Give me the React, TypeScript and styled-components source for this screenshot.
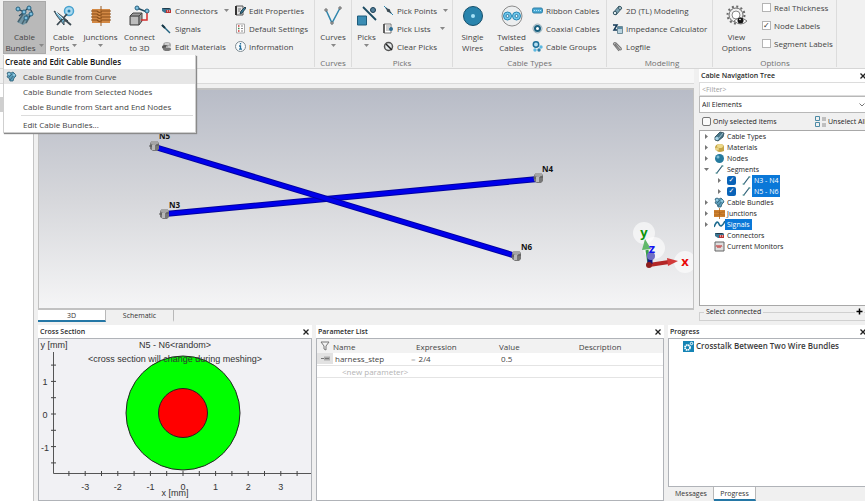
import React from "react";
import styled, { createGlobalStyle, css } from "styled-components";

const ui = `"Open Sans", "Noto Sans", sans-serif`;
const plot = `"Liberation Sans", Arial, sans-serif`;

const GlobalStyle = createGlobalStyle`
  *, *::before, *::after { box-sizing: border-box; }
  body { margin: 0; background: #f0f0f0; font-family: ${ui}; font-size: 8px; color: #444; }
  button, input, select { font: inherit; color: inherit; margin: 0; padding: 0; }
  button { border: 0; background: none; }
  svg { display: block; flex: none; }
`;

const Page = styled.div`
  position: relative;
  display: flex;
  flex-direction: column;
  min-height: 100vh;
  overflow: hidden;
`;

/* Ribbon */

const Ribbon = styled.header`
  display: flex;
  height: 69px;
  background: #f1f1f1;
  border-bottom: 1px solid #d6d6d6;
`;

const Group = styled.section<{ $w: number; $pad?: number }>`
  display: flex;
  flex-direction: column;
  flex: none;
  width: ${(p) => p.$w}px;
  padding-left: ${(p) => p.$pad ?? 0}px;
  border-right: 1px solid #dcdcdc;
  margin-bottom: 1px;
`;

const Tools = styled.div<{ $gap?: number }>`
  display: flex;
  flex: 1;
  align-items: flex-start;
  gap: ${(p) => p.$gap ?? 0}px;
`;

const GroupName = styled.h2`
  margin: 0;
  font-size: 8px;
  line-height: 9px;
  font-weight: 400;
  text-align: center;
  color: #707070;
`;

const BigButton = styled.button<{ $w: number; $active?: boolean }>`
  display: flex;
  flex-direction: column;
  align-items: center;
  flex: none;
  width: ${(p) => p.$w}px;
  height: 53px;
  margin-top: 1px;
  padding-top: 4px;
  white-space: nowrap;
  ${(p) =>
    p.$active &&
    css`
      background: #b9b9b9;
      box-shadow: inset 0 0 0 1px #aaa;
    `}
  svg:first-child { margin-bottom: 4px; }
`;

const Line = styled.span`
  display: flex;
  align-items: center;
  gap: 3px;
  height: 11px;
`;

const SmallColumn = styled.div<{ $w: number; $pad?: number }>`
  display: flex;
  flex-direction: column;
  flex: none;
  width: ${(p) => p.$w}px;
  padding-top: 1px;
  padding-left: ${(p) => p.$pad ?? 0}px;
`;

const SmallButton = styled.button`
  display: flex;
  align-items: center;
  gap: 3px;
  height: 18px;
  white-space: nowrap;
`;

const CaretBox = styled.span<{ $end?: boolean }>`
  margin-left: ${(p) => (p.$end ? "auto" : "6px")};
`;

const OptionColumn = styled.div`
  display: flex;
  flex-direction: column;
  gap: 4px;
`;

const Option = styled.label`
  display: flex;
  align-items: center;
  gap: 3px;
  height: 14px;
  white-space: nowrap;
`;

const OptionBox = styled.input`
  appearance: none;
  width: 9px;
  height: 9px;
  border: 1px solid #b4b4b4;
  background: #fff;
  &:checked::after {
    content: "✓";
    display: block;
    font: 8px/7px "DejaVu Sans", sans-serif;
    color: #333;
  }
`;

/* Drop-down menu */

const Menu = styled.div`
  position: absolute;
  z-index: 2;
  left: 3px;
  top: 55px;
  width: 193px;
  background: #fff;
  border: 1px solid #cfcfcf;
  border-top: 0;
  box-shadow: 1px 1px 1px #8a8a8a;
`;

const MenuTitle = styled.h3`
  margin: 0;
  padding-left: 1px;
  height: 14px;
  font: 600 8px/14px ${ui};
  color: #111;
`;

const MenuItem = styled.button<{ $hot?: boolean }>`
  display: flex;
  align-items: center;
  width: 100%;
  height: 15px;
  background: ${(p) => (p.$hot ? "#e6e6e6" : "#fff")};
`;

const MenuIcon = styled.span`
  width: 19px;
  padding-left: 2px;
`;

const Separator = styled.hr`
  margin: 1px 2px 1px 17px;
  border: 0;
  border-top: 1px solid #dcdcdc;
`;

/* Workspace */

const Workspace = styled.main`
  display: flex;
  flex: 1;
  margin-right: -4px;
`;

const SideStrip = styled.aside`
  flex: none;
  width: 34px;
  margin-top: 14px;
  padding-top: 13px;
  background: #fff;
  border-top: 1px solid #dadada;
  border-right: 1px solid #c4c4c4;
`;

const StripMark = styled.div`
  height: 15px;
  background: #cfcfcf;
`;

const Docks = styled.div`
  display: flex;
  flex-direction: column;
  flex: 1;
  min-width: 0;
  gap: 3px;
  padding-left: 4px;
`;

const Upper = styled.div`
  display: flex;
  flex: 1;
  gap: 5px;
`;

const ViewColumn = styled.div`
  display: flex;
  flex-direction: column;
  flex: 1;
  min-width: 0;
`;

const DocumentBar = styled.div`
  height: 15px;
  margin-left: -4px;
  margin-bottom: 4px;
  background: #f7f7f7;
  border-bottom: 1px solid #dadada;
`;

const Viewport = styled.div`
  display: flex;
  flex: 1;
  border: 2px solid #c2c2c2;
  border-left-width: 1px;
  border-right-width: 1px;
  background: linear-gradient(#b8bcc7, #d6d7db 50%, #f5f5f6);
`;

const Scene = styled.svg`
  flex: 1;
  width: 100%;
  min-width: 0;
  height: auto;
  text { font: 700 8px ${ui}; fill: #111; }
`;

const AxisName = styled.text<{ $color: string }>`
  && { font: 700 13px ${ui}; fill: ${(p) => p.$color}; text-anchor: middle; }
`;

const TabBar = styled.div`
  display: flex;
  flex: none;
  height: 12px;
`;

const Tab = styled.button<{ $on?: boolean; $w: number }>`
  width: ${(p) => p.$w}px;
  font: 7px/9px ${ui};
  color: #333;
  border-right: 1px solid #b8b8b8;
  border-bottom: 2px solid ${(p) => (p.$on ? "#2477a6" : "transparent")};
  background: ${(p) => (p.$on ? "#fff" : "transparent")};
`;

/* Panels */

const Panel = styled.section`
  display: flex;
  flex-direction: column;
  min-width: 0;
`;

const NavPanel = styled(Panel)`
  flex: none;
  width: 170px;
  margin-bottom: 1px;
  font: 7px ${ui};
  color: #222;
`;

const PanelHead = styled.div`
  display: flex;
  align-items: center;
  justify-content: space-between;
  flex: none;
  height: 13px;
  padding: 0 2px;
  background: #fff;
`;

const PanelName = styled.h2`
  margin: 0;
  font: 600 7px/12px ${ui};
  color: #2a2a2a;
`;

const Close = styled.button`
  display: flex;
  padding: 1px;
`;

const PanelBody = styled.div<{ $tint?: boolean }>`
  display: flex;
  flex-direction: column;
  flex: 1;
  min-height: 0;
  border: 1px solid #b0b3b8;
  background: ${(p) => (p.$tint ? "#f1f1f4" : "#fff")};
`;

const Filter = styled.input`
  height: 14px;
  padding: 0 2px;
  border: 1px solid #dcdcdc;
  background: #fff;
  &::placeholder { color: #a0a0a0; opacity: 1; }
`;

const SelectWrap = styled.div`
  display: flex;
  align-items: center;
  height: 17px;
  border: 1px solid #b8b8b8;
  background: #fff;
  padding-right: 3px;
`;

const Select = styled.select`
  appearance: none;
  flex: 1;
  padding: 0 2px;
  border: 0;
  background: none;
`;

const NavTools = styled.div`
  display: flex;
  align-items: center;
  justify-content: space-between;
  height: 17px;
  padding: 0 3px;
  white-space: nowrap;
`;

const CheckLabel = styled.label`
  display: flex;
  align-items: center;
  gap: 2px;
`;

const PlainBox = styled.input`
  appearance: none;
  width: 9px;
  height: 9px;
  border: 1px solid #777;
  border-radius: 2px;
  background: #fafafa;
`;

const Unselect = styled.button`
  display: flex;
  align-items: center;
  gap: 2px;
`;

const Tree = styled.ul`
  flex: 1;
  margin: 0;
  padding: 0;
  list-style: none;
  background: #fff;
  border: 1px solid #a8a8a8;
`;

const TreeRow = styled.li<{ $level: number }>`
  display: flex;
  align-items: center;
  height: 11px;
  padding-left: ${(p) => 3 + p.$level * 13}px;
`;

const Twisty = styled.span`
  display: flex;
  justify-content: center;
  width: 7px;
  margin-right: 4px;
`;

const TreeIcon = styled.span`
  width: 11px;
`;

const TreeCheck = styled.input`
  appearance: none;
  width: 9px;
  height: 9px;
  margin-right: 5px;
  border-radius: 2px;
  background: #0a63b8;
  &::after {
    content: "✓";
    display: block;
    font: 7px/9px "DejaVu Sans", sans-serif;
    text-align: center;
    color: #fff;
  }
`;

const TreeText = styled.span<{ $on?: boolean }>`
  padding: 0 2px;
  line-height: 11px;
  background: ${(p) => (p.$on ? "#0a78d8" : "transparent")};
  color: ${(p) => (p.$on ? "#fff" : "inherit")};
`;

const Connected = styled.fieldset`
  display: flex;
  align-items: flex-start;
  justify-content: flex-end;
  min-width: 0;
  height: 15px;
  margin: 0;
  padding: 0 4px 0 0;
  border: 1px solid #d0d0d0;
  legend { margin-left: 4px; padding: 0 2px; line-height: 12px; }
  button { display: flex; margin-top: -11px; padding: 1px; background: #f0f0f0; }
`;

const Lower = styled.div`
  display: grid;
  flex: none;
  grid-template-columns: 274fr 348fr 201fr;
  gap: 4px;
  height: 176px;
`;

const Chart = styled.svg`
  width: 100%;
  height: 100%;
  text { font: 9px ${plot}; fill: #333; text-anchor: middle; }
`;

const Params = styled.table`
  width: 100%;
  table-layout: fixed;
  border-collapse: collapse;
  text-align: left;
  th { height: 14px; padding: 0; line-height: 13px; background: #f2f2f2; font-weight: 400; }
  td { height: 12px; padding: 0; line-height: 11px; border-bottom: 1px solid #e4e4e4; }
`;

const IconCol = styled.col`
  width: 16px;
`;

const Handle = styled.span`
  display: flex;
  align-items: center;
  justify-content: center;
  height: 11px;
  background: #e2e2e2;
`;

const Indent = styled.div<{ $by: number }>`
  display: flex;
  gap: 3px;
  padding-left: ${(p) => p.$by}px;
`;

const Formula = styled(Indent)`
  margin-left: -5px;
`;

const Faint = styled.span`
  color: #b4b4b4;
`;

const Job = styled.p`
  display: flex;
  align-items: center;
  gap: 2px;
  margin: 1px 0 0 14px;
  font: 600 8px/12px ${ui};
  color: #3a3a3a;
  white-space: nowrap;
`;

const BottomTabs = styled(TabBar)`
  height: 14px;
  padding-left: 1px;
`;

/* Icons */

const blue = "#2f86ad";
const navy = "#23475c";

const Icon = ({ s, box, children }: { s: number; box?: string; children: React.ReactNode }) => (
  <svg width={s} height={s} viewBox={box ?? `0 0 ${s} ${s}`} fill="none" aria-hidden="true">
    {children}
  </svg>
);

const Caret = () => (
  <svg width="5" height="3" viewBox="0 0 5 3" aria-hidden="true">
    <path d="M0 0h5L2.500 3z" fill="#888" />
  </svg>
);

const BundleShape = () => (
  <>
    <path d="M3 17l6-8 9 0-5 9-4 2z" fill="#7296a5" />
    <path d="M4 17l5-8M8 19l5-9M12 18l5-9" stroke="#47636f" strokeWidth="1.500" />
    <path d="M4 4l6 3 5-5 3 5-3 5M10 7l-5 4" stroke={navy} strokeWidth="1.200" />
    <g fill="#7dbfe0" stroke="#28627f">
      <circle cx="4" cy="4" r="2" />
      <circle cx="10" cy="7" r="2" />
      <circle cx="15" cy="3" r="2" />
      <circle cx="17" cy="9" r="2" />
      <circle cx="12" cy="13" r="2" />
    </g>
  </>
);

const BundleBlob = () => (
  <>
    <path d="M1 2l2-1 2 1 2-1 2 2 1 2-2 2-1 3-3 0-1-3-2-1 1-2z" fill="#5a9dbb" stroke="#2b5d75" strokeWidth=".8" />
    <path d="M4 9l4-5M3 6l3-3" stroke="#3d6b80" />
    <circle cx="3" cy="3" r="1" fill="#a5d8ee" />
    <circle cx="8" cy="4" r="1" fill="#a5d8ee" />
  </>
);

const icons = {
  bundles: <Icon s={22}><BundleShape /></Icon>,
  bundleSmall: <Icon s={11}><BundleBlob /></Icon>,
  ports: (
    <Icon s={22}>
      <circle cx="16" cy="6" r="4.500" fill="#a9d9ef" stroke="#48a2cf" strokeWidth="1.500" />
      <circle cx="16" cy="6" r="1.500" fill="#287fae" />
      <path d="M1 6l5 3 9 7-4 0 0 4-7-9z" fill="#6fb2d0" stroke="#3c4a52" />
      <path d="M4 20l10-11M11 14l7 6" stroke="#3c4a52" strokeWidth="1.800" />
      <path d="M3 7l7 7" stroke="#d9edf5" />
    </Icon>
  ),
  junctions: (
    <Icon s={22}>
      <path d="M2 4h18v14H2z" fill="#d38945" />
      <path d="M1 6h6q3 3 5 0h9M1 9h6q3 3 5 0h9M1 12h6q3 3 5 0h9M1 15h6q3 3 5 0h9" stroke="#8a4f1a" strokeWidth="1.200" />
      <path d="M11 1v20" stroke="#9a5a20" />
    </Icon>
  ),
  connect3d: (
    <Icon s={22}>
      <path d="M1 11l3-3h9v8l-3 4H1z" fill="#9b9b9b" stroke="#444" />
      <path d="M1 11h9v9M10 11l3-3" stroke="#444" />
      <path d="M2 12h7v7H2z" fill="#bdbdbd" />
      <path d="M8 3l10 4" stroke={navy} strokeWidth="1.500" />
      <path d="M18 8v7h-6" stroke="#d62d2d" strokeWidth="1.500" />
      <circle cx="8" cy="3" r="2" fill="#7dbfe0" stroke="#28627f" />
      <circle cx="18" cy="6" r="2" fill="#7dbfe0" stroke="#28627f" />
    </Icon>
  ),
  connectors: (
    <Icon s={11}>
      <path d="M1 3h7l2 1v4H4L1 6z" fill="#3b7591" />
      <path d="M1 3h7l2 1H3z" fill="#20394a" />
      <path d="M5 5h5v3H5z" fill="#b93434" />
      <path d="M6 6h1M8 6h1" stroke="#fff" />
    </Icon>
  ),
  signals: <Icon s={11}><path d="M1 2l8 8" stroke="#226380" strokeWidth="1.500" /><path d="M1 2l3 3" stroke="#173746" strokeWidth="2" /></Icon>,
  materials: (
    <Icon s={11}>
      <ellipse cx="6" cy="4" rx="4" ry="3" fill="#aaa" />
      <ellipse cx="4" cy="6" rx="3" ry="2" fill="#555" />
      <ellipse cx="6" cy="8" rx="4" ry="2" fill="#777" />
      <path d="M4 3h4M5 6h4" stroke="#eee" />
    </Icon>
  ),
  edit: (
    <Icon s={11}>
      <path d="M1 1h7v9H1z" fill="#e4e4e4" stroke="#555" />
      <path d="M1 1v9" stroke="#333" strokeWidth="2" />
      <path d="M3 4h3M3 6h2" stroke="#777" />
      <path d="M5 9l1-3 4-4 1 1-4 5z" fill="#397e9e" stroke="#27424f" />
    </Icon>
  ),
  settings: (
    <Icon s={11}>
      <path d="M1.500 1h8v9h-8z" fill="#fff" stroke="#aaa" />
      <path d="M3 3h1.500M3 8h1.500" stroke="#c33" strokeWidth="1.500" />
      <path d="M3 5.500h1.500" stroke="#3a8a50" strokeWidth="1.500" />
      <path d="M6 3h2M6 5.500h2M6 8h2" stroke="#888" />
    </Icon>
  ),
  info: (
    <Icon s={11}>
      <circle cx="5.500" cy="5.500" r="5" fill="#f8fbfd" stroke="#7e8b92" />
      <path d="M5.500 2v1.500M4 5h1.500v3M4 8.200h3" stroke="#226f9c" strokeWidth="1.300" />
    </Icon>
  ),
  curves: (
    <Icon s={22}>
      <path d="M4 5l6 13L18 3" stroke={blue} strokeWidth="1.500" />
      <path d="M3 4h2v2H3zM9 17h2v2H9zM17 2h2v2h-2z" fill="#eee" stroke="#666" />
    </Icon>
  ),
  picks: (
    <Icon s={22}>
      <path d="M1.500 11h9v9h-9z" fill="#3b8db4" stroke="#1f5d7c" />
      <path d="M7 2l13 13" stroke="#1b4a62" strokeWidth="1.800" />
      <circle cx="17" cy="5" r="2.500" fill="#55809a" stroke="#183f57" />
    </Icon>
  ),
  pickPoints: <Icon s={11}><path d="M1 1l9 9" stroke={blue} /><path d="M3 3l5 5" stroke={navy} strokeWidth="1.500" /><circle cx="5.500" cy="5.500" r="1.700" fill="#3f4d55" /></Icon>,
  pickLists: (
    <Icon s={11}>
      <path d="M1 1h7v9H1z" fill="#fff" stroke="#777" />
      <path d="M1 1v9" stroke="#444" strokeWidth="1.500" />
      <path d="M3 3h4M3 5h3M3 7h4" stroke="#999" />
      <circle cx="8" cy="6" r="2" fill="#2c6d93" />
    </Icon>
  ),
  clearPicks: <Icon s={11}><circle cx="5.500" cy="5.500" r="4" fill="#e4e9eb" stroke="#555" strokeWidth="1.500" /><path d="M3 3l6 6" stroke="#222" strokeWidth="1.500" /></Icon>,
  single: <Icon s={22}><circle cx="11" cy="11" r="9.500" fill="#2984ad" stroke="#164f6b" /><circle cx="11" cy="11" r="2" fill="#a5e2f7" /></Icon>,
  twisted: (
    <Icon s={22}>
      <circle cx="11" cy="11" r="10" fill="#eceeef" stroke="#8b8b8b" />
      <circle cx="6.500" cy="11" r="4" fill="#72c9ee" stroke="#2686b3" />
      <circle cx="15.500" cy="11" r="4" fill="#72c9ee" stroke="#2686b3" />
      <circle cx="6.500" cy="11" r="1.500" fill="#e6f7ff" stroke="#1c668b" strokeWidth=".8" />
      <circle cx="15.500" cy="11" r="1.500" fill="#e6f7ff" stroke="#1c668b" strokeWidth=".8" />
    </Icon>
  ),
  ribbon: <Icon s={11}><rect x=".5" y="3" width="10" height="5" rx="1.500" fill="#49a9d4" stroke="#2f7fa5" /><path d="M2 5.500h7" stroke="#b9e6fa" strokeDasharray="1 1" /></Icon>,
  coaxial: <Icon s={11}><circle cx="5.500" cy="5.500" r="4.500" fill="#cfe0e7" stroke="#9fb3bc" /><circle cx="5.500" cy="5.500" r="2.500" fill="#fff" stroke="#19607f" strokeWidth="2" /></Icon>,
  groups: (
    <Icon s={11}>
      <circle cx="4" cy="3.500" r="2.700" fill="#b6def0" stroke="#1c6f98" strokeWidth="1.500" />
      <circle cx="9" cy="6" r="1.700" fill="#5cb8e0" />
      <circle cx="3" cy="9" r="1.700" fill="#5cb8e0" />
      <circle cx="7" cy="9" r="1.700" fill="#2c7fa8" />
    </Icon>
  ),
  modeling: <Icon s={11}><path d="M1 8l6-7 3 2-6 7z" fill="#7ca3b3" stroke="#3d5c69" /><circle cx="3" cy="8" r="1.700" fill="#dbe9ee" stroke="#3d5c69" /><circle cx="8" cy="3" r="1.500" fill="#c3dbe4" stroke="#3d5c69" /></Icon>,
  impedance: <Icon s={11}><path d="M1 2h4L2 7h4" stroke="#133a58" strokeWidth="1.500" /><path d="M5.500 3.500h5v7h-5z" fill="#b9d3df" stroke="#6f8c99" /><path d="M6 5h4" stroke="#3c7391" strokeWidth="1.500" /></Icon>,
  log: <Icon s={11}><path d="M3 3l5 6q2 0 1-2L4 2Q2 1 1.500 3L7 10" stroke="#777" strokeWidth="1.200" /></Icon>,
  gear: (
    <Icon s={22}>
      <circle cx="10" cy="10" r="8.500" stroke="#6a6a6a" strokeWidth="2" strokeDasharray="2 2.450" />
      <circle cx="10" cy="10" r="7" fill="#f1f1f1" stroke="#6a6a6a" />
      <circle cx="10" cy="10" r="4" fill="#fff" stroke="#888" />
      <path d="M8 16q6-6 13 0-6 6-13 0z" fill="#fff" stroke="#777" />
      <circle cx="14.500" cy="15.500" r="3" fill="#151515" />
      <circle cx="14" cy="14.500" r=".8" fill="#fff" />
    </Icon>
  ),
  cableTypes: <Icon s={11}><path d="M1 6l5-5 4 1-1 4-5 4-3-1z" fill="#47778a" stroke="#27424f" strokeWidth=".8" /><circle cx="3" cy="7.500" r="1.800" fill="#a9d5e8" /><path d="M5 7l4-5" stroke="#9dbcc8" /></Icon>,
  gold: <Icon s={11}><path d="M1 6q0-4 5-4 4 0 4 3v4q-5 2-7 0z" fill="#c5a548" /><ellipse cx="6" cy="4" rx="3" ry="2" fill="#ecd98a" /><ellipse cx="3" cy="7" rx="2" ry="1.500" fill="#e8d38a" /></Icon>,
  node: <Icon s={11}><circle cx="5.500" cy="5.500" r="4.500" fill="#257a9e" /><circle cx="4" cy="4" r="1.500" fill="#7cbcd4" /></Icon>,
  segment: <Icon s={11}><path d="M2.500 9.500L8.500 1.500" stroke="#2c5f77" strokeWidth="1.200" /><circle cx="2.500" cy="9" r="1" fill="#7aa" /><circle cx="8.500" cy="2" r="1" fill="#7aa" /></Icon>,
  junctionSmall: <Icon s={11}><path d="M0 2h11v7H0z" fill="#d0822f" /><path d="M0 4h4l2 1 2-1h3M0 7h4l2-1 2 1h3M5.500 0v11" stroke="#a8651f" strokeWidth=".8" /></Icon>,
  wave: <Icon s={11}><path d="M0 8q3-8 5-3t6-3" stroke="#1f6c90" strokeWidth="1.600" /></Icon>,
  monitor: <Icon s={11}><path d="M1 1h9v9H1z" fill="#ddd" stroke="#666" /><path d="M2 6l1-2 1 3 1-3 1 3 1-3 1 2" stroke="#c64a4a" strokeWidth=".8" /></Icon>,
  job: <Icon s={11}><path d="M0 0h11v11H0z" fill="#1584b5" /><circle cx="4.500" cy="6.500" r="2.500" stroke="#fff" strokeWidth="1.800" strokeDasharray="1.500 .5" /><circle cx="8.500" cy="2.500" r="1.200" stroke="#fff" /></Icon>,
  list: <Icon s={11}><path d="M.5.500h4v4h-4zM.5 6.500h4v4h-4z" stroke="#4c8aa5" /><path d="M7 2h4M7 4h4M7 8h4M7 10h4" stroke="#777" strokeWidth=".8" /></Icon>,
  funnel: <Icon s={10}><path d="M1 1h8L6 5v4L4 8V5z" stroke="#777" /></Icon>,
};

type IconName = keyof typeof icons;

const Big = ({ icon, w, a, b, caret, active }: { icon: IconName; w: number; a: string; b?: string; caret?: boolean; active?: boolean }) => (
  <BigButton $w={w} $active={active} type="button">
    {icons[icon]}
    <Line>{a}</Line>
    <Line>
      {b}
      {caret && <Caret />}
    </Line>
  </BigButton>
);

const Small = ({ icon, text, caret }: { icon: IconName; text: string; caret?: "near" | "end" }) => (
  <SmallButton type="button">
    {icons[icon]}
    {text}
    {caret && (
      <CaretBox $end={caret === "end"}>
        <Caret />
      </CaretBox>
    )}
  </SmallButton>
);

const CloseButton = ({ name }: { name: string }) => (
  <Close type="button" aria-label={`Close ${name}`}>
    <svg width="6" height="6" viewBox="0 0 6 6" aria-hidden="true">
      <path d="M.5.500l5 5M5.500.500l-5 5" stroke="#222" strokeWidth="1.300" />
    </svg>
  </Close>
);

const Head = ({ name }: { name: string }) => (
  <PanelHead>
    <PanelName>{name}</PanelName>
    <CloseButton name={name} />
  </PanelHead>
);

type Row = { icon: IconName; text: string; level?: number; open?: boolean; leaf?: boolean; on?: boolean };

const rows: Row[] = [
  { icon: "cableTypes", text: "Cable Types" },
  { icon: "gold", text: "Materials" },
  { icon: "node", text: "Nodes" },
  { icon: "segment", text: "Segments", open: true },
  { icon: "segment", text: "N3 - N4", level: 1, on: true },
  { icon: "segment", text: "N5 - N6", level: 1, on: true },
  { icon: "bundleSmall", text: "Cable Bundles" },
  { icon: "junctionSmall", text: "Junctions" },
  { icon: "wave", text: "Signals", on: true },
  { icon: "connectors", text: "Connectors", leaf: true },
  { icon: "monitor", text: "Current Monitors", leaf: true },
];

const Node = ({ x, y }: { x: number; y: number }) => (
  <g transform={`translate(${x} ${y})`}>
    <path d="M-4-3l2-2h5l2 2v6l-2 2h-4l-3-2z" fill="#777" />
    <path d="M-4-3l2-2h5l2 2-3 2h-3z" fill="#a5a5a5" />
    <path d="M-2-1h3v5h-3z" fill="#b8b8b8" />
    <path d="M-5 0h3M2-1h3" stroke="#555" />
  </g>
);

const Wire = ({ d }: { d: string }) => (
  <>
    <path d={d} stroke="#0000a0" strokeWidth="6" />
    <path d={d} stroke="#0000ea" strokeWidth="4" />
  </>
);

const ModelView = () => (
  <Scene viewBox="0 0 654 218" role="img" aria-label="Two crossing wire segments">
    <Wire d="M126 124L499 89" />
    <Wire d="M116 57L477 166" />
    <Node x={125} y={124} />
    <Node x={499} y={88} />
    <Node x={115} y={56} />
    <Node x={477} y={166} />
    <text x="130" y="118">N3</text>
    <text x="503" y="82">N4</text>
    <text x="120" y="49">N5</text>
    <text x="482" y="160">N6</text>
    <g fill="#fff" fillOpacity=".6">
      <circle cx="605" cy="143" r="11" />
      <circle cx="615" cy="158" r="11" />
      <circle cx="646" cy="172" r="11" />
    </g>
    <path d="M610 174L608 160" stroke="#3aa04a" strokeWidth="3" />
    <path d="M603 160l3-11 6 10z" fill="#62b86a" />
    <path d="M610 175l20-3" stroke="#b32626" strokeWidth="4" />
    <path d="M628 168l11 3-10 5z" fill="#d13a3a" />
    <path d="M611 174v-9" stroke="#15157d" strokeWidth="5" />
    <circle cx="612" cy="166" r="4" fill="#7070c4" />
    <circle cx="610" cy="175" r="3" fill="#8e1d1d" />
    <AxisName $color="#0a940a" x="605" y="147">y</AxisName>
    <AxisName $color="#1414f0" x="613" y="163">z</AxisName>
    <AxisName $color="#e80808" x="646" y="176">x</AxisName>
  </Scene>
);

const unit = 32.6;
const originX = 144;
const originY = 75;
const halves = [-7, -6, -5, -4, -3, -2, -1, 0, 1, 2, 3, 4, 5, 6, 7];

const CrossSection = () => (
  <Chart viewBox="0 0 272 161" role="img" aria-label="Cross section of N5 - N6">
    <circle cx={originX} cy={originY - 1} r="57" fill="#0f0" stroke="#222" />
    <circle cx={originX} cy={originY - 1} r="24.500" fill="#f00" stroke="#222" />
    <path d="M14.500 13v121.500H273" fill="none" stroke="#555" />
    {halves.map((n) => (
      <path key={n} d={`M${originX + (n * unit) / 2} 132v5`} stroke="#444" />
    ))}
    {halves.slice(4, 11).map((n) => (
      <path key={n} d={`M12 ${originY - (n * unit) / 2}h5`} stroke="#444" />
    ))}
    {[-3, -2, -1, 0, 1, 2, 3].map((n) => (
      <text key={n} x={originX + n * unit} y="151">{n}</text>
    ))}
    {[1, 0, -1].map((n) => (
      <text key={n} x="6" y={originY + 4 - n * unit}>{n}</text>
    ))}
    <text x="15" y="9">y [mm]</text>
    <text x="136" y="157">x [mm]</text>
    <text x="136" y="9">N5 - N6&lt;random&gt;</text>
    <text x="136" y="23">&lt;cross section will change during meshing&gt;</text>
  </Chart>
);

export default function App() {
  return (
    <Page>
      <GlobalStyle />
      <Ribbon>
        <Group $w={315} $pad={3}>
          <Tools>
            <Big icon="bundles" w={43} a="Cable" b="Bundles" caret active />
            <Big icon="ports" w={35} a="Cable" b="Ports" caret />
            <Big icon="junctions" w={39} a="Junctions" caret />
            <Big icon="connect3d" w={39} a="Connect" b="to 3D" />
            <SmallColumn $w={70} $pad={2}>
              <Small icon="connectors" text="Connectors" caret="end" />
              <Small icon="signals" text="Signals" />
              <Small icon="materials" text="Edit Materials" />
            </SmallColumn>
            <SmallColumn $w={80} $pad={6}>
              <Small icon="edit" text="Edit Properties" />
              <Small icon="settings" text="Default Settings" />
              <Small icon="info" text="Information" />
            </SmallColumn>
          </Tools>
        </Group>
        <Group $w={37}>
          <Tools><Big icon="curves" w={36} a="Curves" caret /></Tools>
          <GroupName>Curves</GroupName>
        </Group>
        <Group $w={101}>
          <Tools $gap={2}>
            <Big icon="picks" w={29} a="Picks" caret />
            <SmallColumn $w={65}>
              <Small icon="pickPoints" text="Pick Points" caret="end" />
              <Small icon="pickLists" text="Pick Lists" caret="near" />
              <Small icon="clearPicks" text="Clear Picks" />
            </SmallColumn>
          </Tools>
          <GroupName>Picks</GroupName>
        </Group>
        <Group $w={154}>
          <Tools $gap={3}>
            <Big icon="single" w={39} a="Single" b="Wires" />
            <Big icon="twisted" w={33} a="Twisted" b="Cables" />
            <SmallColumn $w={74} $pad={1}>
              <Small icon="ribbon" text="Ribbon Cables" />
              <Small icon="coaxial" text="Coaxial Cables" />
              <Small icon="groups" text="Cable Groups" />
            </SmallColumn>
          </Tools>
          <GroupName>Cable Types</GroupName>
        </Group>
        <Group $w={106} $pad={5}>
          <Tools>
            <SmallColumn $w={98}>
              <Small icon="modeling" text="2D (TL) Modeling" />
              <Small icon="impedance" text="Impedance Calculator" />
              <Small icon="log" text="Logfile" />
            </SmallColumn>
          </Tools>
          <GroupName>Modeling</GroupName>
        </Group>
        <Group $w={124} $pad={1}>
          <Tools $gap={3}>
            <Big icon="gear" w={45} a="View" b="Options" />
            <OptionColumn>
              <Option><OptionBox type="checkbox" />Real Thickness</Option>
              <Option><OptionBox type="checkbox" defaultChecked />Node Labels</Option>
              <Option><OptionBox type="checkbox" />Segment Labels</Option>
            </OptionColumn>
          </Tools>
          <GroupName>Options</GroupName>
        </Group>
      </Ribbon>

      <Menu role="menu">
        <MenuTitle>Create and Edit Cable Bundles</MenuTitle>
        <MenuItem $hot role="menuitem"><MenuIcon>{icons.bundleSmall}</MenuIcon>Cable Bundle from Curve</MenuItem>
        <MenuItem role="menuitem"><MenuIcon />Cable Bundle from Selected Nodes</MenuItem>
        <MenuItem role="menuitem"><MenuIcon />Cable Bundle from Start and End Nodes</MenuItem>
        <Separator />
        <MenuItem role="menuitem"><MenuIcon />Edit Cable Bundles...</MenuItem>
      </Menu>

      <Workspace>
        <SideStrip><StripMark /></SideStrip>
        <Docks>
          <Upper>
            <ViewColumn>
              <DocumentBar />
              <Viewport><ModelView /></Viewport>
              <TabBar>
                <Tab $w={68} $on type="button">3D</Tab>
                <Tab $w={68} type="button">Schematic</Tab>
              </TabBar>
            </ViewColumn>
            <NavPanel>
              <Head name="Cable Navigation Tree" />
              <Filter placeholder="<Filter>" aria-label="Filter" />
              <SelectWrap>
                <Select aria-label="Elements"><option>All Elements</option></Select>
                <svg width="6" height="4" viewBox="0 0 6 4" fill="none" aria-hidden="true"><path d="M.5.500L3 3 5.500.500" stroke="#777" /></svg>
              </SelectWrap>
              <NavTools>
                <CheckLabel><PlainBox type="checkbox" />Only selected items</CheckLabel>
                <Unselect type="button">{icons.list}Unselect All</Unselect>
              </NavTools>
              <Tree>
                {rows.map((r) => (
                  <TreeRow key={r.text} $level={r.level ?? 0}>
                    <Twisty>
                      {!r.leaf && (
                        <svg width="5" height="5" viewBox="0 0 5 5" aria-hidden="true">
                          <path d={r.open ? "M0 1h5L2.500 4z" : "M1 0v5l3-2.500z"} fill="#777" />
                        </svg>
                      )}
                    </Twisty>
                    {r.level && <TreeCheck type="checkbox" defaultChecked aria-label={r.text} />}
                    <TreeIcon>{icons[r.icon]}</TreeIcon>
                    <TreeText $on={r.on}>{r.text}</TreeText>
                  </TreeRow>
                ))}
              </Tree>
              <Connected>
                <legend>Select connected</legend>
                <button type="button" aria-label="Expand">
                  <svg width="7" height="7" viewBox="0 0 7 7" aria-hidden="true"><path d="M3.500.500v6M.5 3.500h6" stroke="#000" strokeWidth="1.500" /></svg>
                </button>
              </Connected>
            </NavPanel>
          </Upper>

          <Lower>
            <Panel>
              <Head name="Cross Section" />
              <PanelBody $tint><CrossSection /></PanelBody>
            </Panel>
            <Panel>
              <Head name="Parameter List" />
              <PanelBody>
                <Params>
                  <colgroup>
                    <IconCol />
                    <col width="24%" />
                    <col width="24%" />
                    <col width="23%" />
                    <col />
                  </colgroup>
                  <thead>
                    <tr>
                      <th><Indent $by={3}>{icons.funnel}</Indent></th>
                      <th>Name</th>
                      <th>Expression</th>
                      <th>Value</th>
                      <th>Description</th>
                    </tr>
                  </thead>
                  <tbody>
                    <tr>
                      <td>
                        <Handle>
                          <svg width="9" height="5" viewBox="0 0 9 5" aria-hidden="true">
                            <path d="M0 2.500h3M4 .500v4M6 .500v4M8 .500v4M4 2.500h4" stroke="#777" />
                          </svg>
                        </Handle>
                      </td>
                      <td><Indent $by={2}>harness_step</Indent></td>
                      <td><Formula $by={0}><Faint>=</Faint>2/4</Formula></td>
                      <td><Indent $by={2}>0.5</Indent></td>
                      <td />
                    </tr>
                    <tr>
                      <td />
                      <td colSpan={4}><Indent $by={9}><Faint>&lt;new parameter&gt;</Faint></Indent></td>
                    </tr>
                  </tbody>
                </Params>
              </PanelBody>
            </Panel>
            <Panel>
              <Head name="Progress" />
              <PanelBody><Job>{icons.job}Crosstalk Between Two Wire Bundles</Job></PanelBody>
              <BottomTabs>
                <Tab $w={45} type="button">Messages</Tab>
                <Tab $w={42} $on type="button">Progress</Tab>
              </BottomTabs>
            </Panel>
          </Lower>
        </Docks>
      </Workspace>
    </Page>
  );
}
